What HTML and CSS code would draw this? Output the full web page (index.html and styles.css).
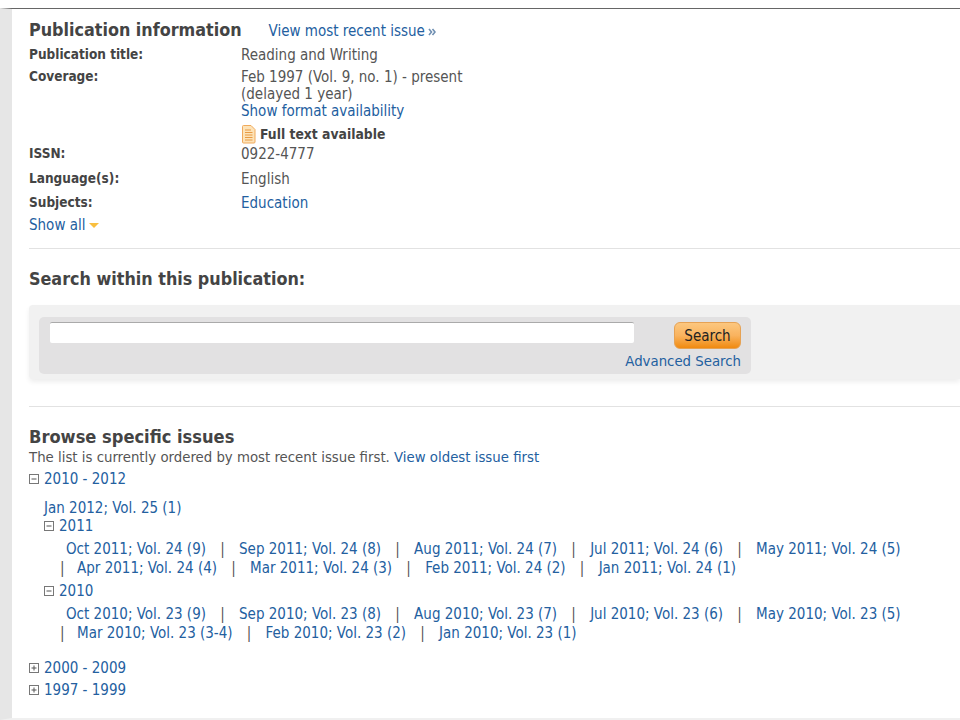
FILE: index.html
```html
<!DOCTYPE html>
<html lang="en">
<head>
<meta charset="utf-8">
<title>Publication information</title>
<link rel="stylesheet" href="styles.css">
</head>
<body>
<div class="page">
  <main class="main">
    <section class="info">
      <div class="head-row">
        <h2 class="h-info">Publication information</h2>
        <a class="link recent" href="#">View most recent issue <svg class="chev" width="8" height="8" viewBox="0 0 8 8"><path d="M1 1l2.500 3L1 7M4.500 1L7 4 4.500 7" fill="none" stroke="#6f8fb2" stroke-width="1.6"/></svg></a>
      </div>
      <div class="row r-title"><div class="label">Publication title:</div><div class="val">Reading and Writing</div></div>
      <div class="row r-cov"><div class="label">Coverage:</div>
        <div class="val">Feb 1997 (Vol. 9, no. 1) - present<br>(delayed 1 year)<br><a class="link" href="#">Show format availability</a>
          <div class="fulltext"><svg width="15" height="19" viewBox="0 0 15 19"><path d="M1.500 1.500a1 1 0 0 1 1-1H10l4 4v12.500a1 1 0 0 1-1 1H2.500a1 1 0 0 1-1-1z" fill="#fde3b8" stroke="#f0aa5c"/><path d="M4 5h6M4 7.500h7.500M4 10h7.500M4 12.500h7.500M4 15h7.500" stroke="#e79a44"/></svg><b>Full text available</b></div>
        </div>
      </div>
      <div class="row r-issn"><div class="label">ISSN:</div><div class="val">0922-4777</div></div>
      <div class="row r-lang"><div class="label">Language(s):</div><div class="val">English</div></div>
      <div class="row r-subj"><div class="label">Subjects:</div><div class="val"><a class="link" href="#">Education</a></div></div>
      <div class="showall"><a class="link" href="#">Show all</a><span class="tri"></span></div>
    </section>
    <hr class="rule rule-a">
    <h2 class="h-search">Search within this publication:</h2>
    <div class="panel">
      <form class="box">
        <div class="input"></div>
        <div class="actions">
          <button class="btn" type="button">Search</button>
          <a class="link adv" href="#">Advanced Search</a>
        </div>
      </form>
    </div>
    <hr class="rule rule-b">
    <h2 class="h-browse">Browse specific issues</h2>
    <p class="order">The list is currently ordered by most recent issue first. <a class="link" href="#">View oldest issue first</a></p>
    <div class="decade d-open"><svg class="tog" width="11" height="11" viewBox="0 0 11 11"><rect x=".5" y=".5" width="9" height="9" fill="#fff" stroke="#777"/><path d="M2.500 5h5" stroke="#555"/></svg><a class="link" href="#">2010 - 2012</a></div>
    <div class="decade-body">
      <div class="single"><a class="link" href="#">Jan 2012; Vol. 25 (1)</a></div>
      <div class="year"><svg class="tog" width="11" height="11" viewBox="0 0 11 11"><rect x=".5" y=".5" width="9" height="9" fill="#fff" stroke="#777"/><path d="M2.500 5h5" stroke="#555"/></svg><a class="link" href="#">2011</a></div>
      <div class="issues">
        <div class="line first"><a class="link" href="#">Oct 2011; Vol. 24 (9)</a><i>|</i><a class="link" href="#">Sep 2011; Vol. 24 (8)</a><i>|</i><a class="link" href="#">Aug 2011; Vol. 24 (7)</a><i>|</i><a class="link" href="#">Jul 2011; Vol. 24 (6)</a><i>|</i><a class="link" href="#">May 2011; Vol. 24 (5)</a></div>
        <div class="line"><i class="lead">|</i><a class="link" href="#">Apr 2011; Vol. 24 (4)</a><i>|</i><a class="link" href="#">Mar 2011; Vol. 24 (3)</a><i>|</i><a class="link" href="#">Feb 2011; Vol. 24 (2)</a><i>|</i><a class="link" href="#">Jan 2011; Vol. 24 (1)</a></div>
      </div>
      <div class="year y2"><svg class="tog" width="11" height="11" viewBox="0 0 11 11"><rect x=".5" y=".5" width="9" height="9" fill="#fff" stroke="#777"/><path d="M2.500 5h5" stroke="#555"/></svg><a class="link" href="#">2010</a></div>
      <div class="issues">
        <div class="line first"><a class="link" href="#">Oct 2010; Vol. 23 (9)</a><i>|</i><a class="link" href="#">Sep 2010; Vol. 23 (8)</a><i>|</i><a class="link" href="#">Aug 2010; Vol. 23 (7)</a><i>|</i><a class="link" href="#">Jul 2010; Vol. 23 (6)</a><i>|</i><a class="link" href="#">May 2010; Vol. 23 (5)</a></div>
        <div class="line"><i class="lead">|</i><a class="link" href="#">Mar 2010; Vol. 23 (3-4)</a><i>|</i><a class="link" href="#">Feb 2010; Vol. 23 (2)</a><i>|</i><a class="link" href="#">Jan 2010; Vol. 23 (1)</a></div>
      </div>
    </div>
    <div class="decade d-2000"><svg class="tog" width="11" height="11" viewBox="0 0 11 11"><rect x=".5" y=".5" width="9" height="9" fill="#fff" stroke="#777"/><path d="M2.500 5h5M5 2.500v5" stroke="#555"/></svg><a class="link" href="#">2000 - 2009</a></div>
    <div class="decade d-1997"><svg class="tog" width="11" height="11" viewBox="0 0 11 11"><rect x=".5" y=".5" width="9" height="9" fill="#fff" stroke="#777"/><path d="M2.500 5h5M5 2.500v5" stroke="#555"/></svg><a class="link" href="#">1997 - 1999</a></div>
  </main>
</div>
</body>
</html>
```

FILE: styles.css
```css
* { box-sizing: border-box; }
html, body { margin: 0; height: 720px; overflow: hidden; background: #fff; }
body {
  padding-top: 8px;
  font-family: "DejaVu Sans", "Liberation Sans", sans-serif;
  font-stretch: condensed;
  font-size: 15px;
  line-height: 17px;
  color: #555;
}
.page {
  height: 712px;
  border-top: 1px solid #666;
  border-left: 12px solid #e6e6e6;
  border-bottom: 2px solid #f0f0f0;
}
.main { padding: 0 0 0 17px; }
.link { color: #23609f; text-decoration: none; }
h2 { margin: 0; font-size: 17.800px; line-height: 22px; font-weight: 700; color: #444; }
.head-row { display: flex; align-items: flex-start; padding-top: 10px; height: 37px; }
.recent { margin: 4px 0 0 27px; }
.chev { margin-left: -1px; }
.row { display: grid; grid-template-columns: 212px 1fr; }
.label { font-weight: 700; font-size: 13.500px; color: #444; }
.val { padding-top: 1px; }
.r-title { height: 22px; }
.r-cov { height: 77px; }
.r-issn { height: 25px; }
.r-lang { height: 24px; }
.r-subj { height: 22px; }
.fulltext { display: flex; align-items: center; gap: 4px; height: 19px; margin-top: 5px; }
.fulltext b { color: #444; font-size: 13.800px; }
.showall { display: flex; align-items: center; gap: 4px; padding-top: 1px; }
.tri { width: 0; height: 0; border-style: solid; border-width: 5px 5px 0; border-color: #f9bf3f transparent transparent; }
.rule { margin: 0; border: 0; height: 1px; background: #e2e2e2; }
.rule-a { margin-top: 14px; }
.h-search { margin-top: 19px; }
.panel {
  margin-top: 15px;
  height: 74px;
  padding: 12px 10px 0;
  background: #f1f1f1;
  box-shadow: 0 3px 5px #eee;
  border-radius: 4px 0 0 4px;
}
.box {
  width: 712px;
  height: 57px;
  display: flex;
  justify-content: space-between;
  padding: 5px 10px 0 11px;
  background: #e2e1e2;
  border-radius: 5px;
}
.input { flex: none; width: 584px; height: 21px; background: #fff; border-top: 1px solid #aaa; border-radius: 2px; }
.actions { display: flex; flex-direction: column; align-items: flex-end; gap: 3px; flex: none; width: 67px; }
.btn {
  flex: none;
  width: 67px;
  height: 27px;
  padding: 2px 0 0;
  font: inherit;
  color: #222;
  background: linear-gradient(#fcc77f, #f9b35f 50%, #f08a10);
  border: 1px solid #e6a254;
  border-radius: 6px;
}
.adv { white-space: nowrap; font-size: 14.800px; }
.rule-b { margin-top: 27px; }
.h-browse { margin-top: 19px; font-size: 18.100px; }
.order { margin: 0; font-size: 14.800px; }
.decade, .year { display: flex; align-items: center; }
.tog { margin-right: 4px; flex: none; }
.d-open { margin-top: 6px; height: 17px; }
.decade-body { padding: 0 0 0 15px; }
.single { margin-top: 12px; }
.year { height: 19px; }
.y2 { margin-top: 3px; }
.issues { padding: 5px 0 0 0; }
.line { height: 19px; white-space: nowrap; padding-left: 22px; }
.line i { font-style: normal; display: inline-block; width: 33px; text-align: center; color: #555; }
.line i.lead { width: 17px; text-align: left; margin-left: -6px; }
.d-2000 { margin-top: 16px; height: 17px; }
.d-1997 { margin-top: 5px; height: 17px; }
```
